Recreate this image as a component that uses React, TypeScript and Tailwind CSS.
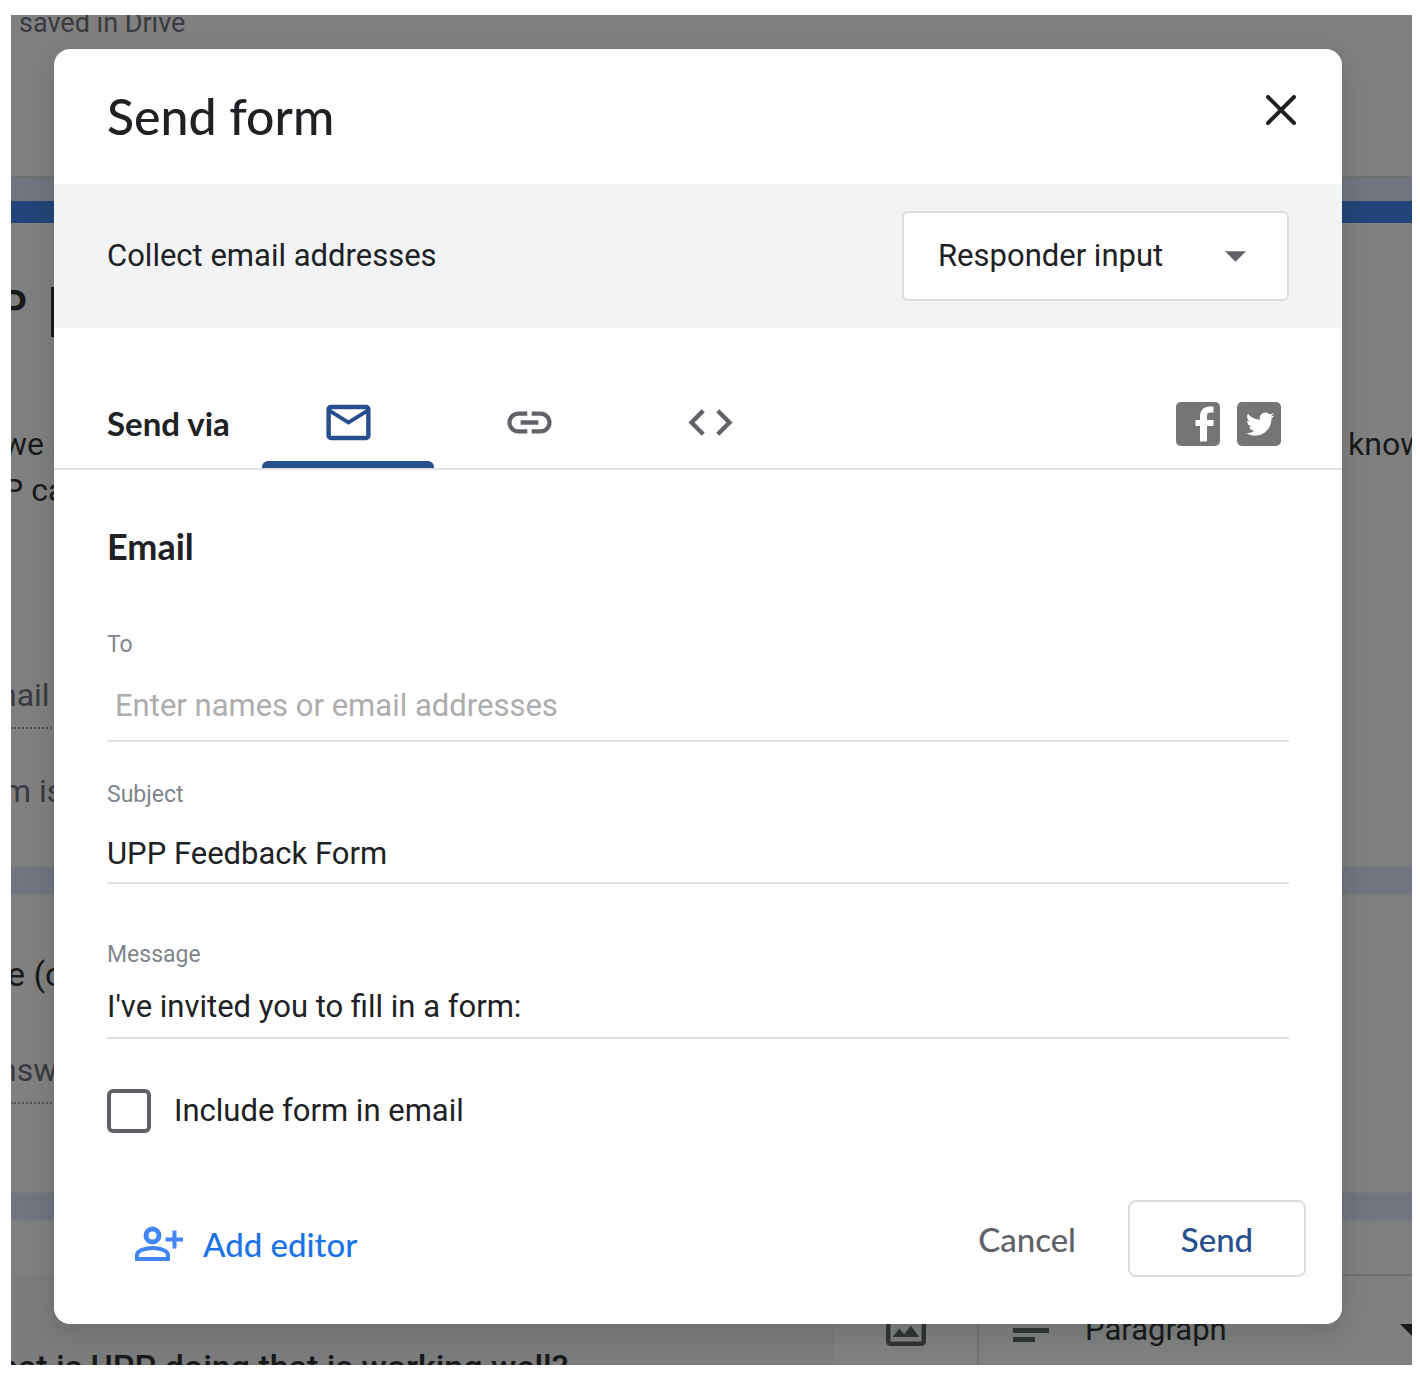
import React from "react";

const tabs = [
  {
    name: "Send by email",
    active: true,
    path: "M22 6c0-1.100-.9-2-2-2H4c-1.100 0-2 .9-2 2v12c0 1.100.9 2 2 2h16c1.100 0 2-.9 2-2V6zm-2 0l-8 5-8-5h16zm0 12H4V8l8 5 8-5v10z",
  },
  {
    name: "Send by link",
    active: false,
    path: "M3.900 12c0-1.710 1.390-3.100 3.100-3.100h4V7H7c-2.760 0-5 2.240-5 5s2.240 5 5 5h4v-1.900H7c-1.710 0-3.100-1.390-3.100-3.100zM8 13h8v-2H8v2zm9-6h-4v1.900h4c1.710 0 3.100 1.390 3.100 3.100s-1.390 3.100-3.100 3.100h-4V17h4c2.760 0 5-2.240 5-5s-2.240-5-5-5z",
  },
  {
    name: "Embed HTML",
    active: false,
    path: "M9.400 16.600L4.800 12l4.600-4.600L8 6l-6 6 6 6 1.400-1.400zm5.200 0l4.600-4.600-4.600-4.600L16 6l6 6-6 6-1.400-1.400z",
  },
];

const Caret = ({ className }: { className: string }) => (
  <svg viewBox="0 0 20 10" aria-hidden="true" className={className}>
    <path d="M0 0h20L10 10z" fill="currentColor" />
  </svg>
);

const Band = () => (
  <div className="h-[29px] shrink-0 border-y-2 border-[#76787c] bg-[#70757f]" />
);

const FormPage = () => (
  <div
    aria-hidden="true"
    className="absolute inset-0 flex flex-col overflow-hidden bg-[#808080] whitespace-nowrap text-[#18191b]"
  >
    <div className="h-[161px] shrink-0 px-2 text-[27px] leading-4 text-[#393b3e]">
      saved in Drive
    </div>
    <div className="h-[25px] shrink-0 border-t-2 border-[#6f7072] bg-[#70757f]" />
    <div className="h-[22px] shrink-0 bg-[#234478]" />
    <div className="flex h-[643px] shrink-0 flex-col">
      <div className="mt-[58px] flex items-start leading-[52px]">
        <span className="-indent-3 text-[44px] font-medium">P</span>
        <span className="mt-[6px] ml-6 h-[50px] w-1 bg-[#18191b]" />
      </div>
      <div className="mt-[84px] flex justify-between text-[32px] leading-[46px]">
        <div>
          <p className="-indent-2">we are</p>
          <p className="-indent-2">P can</p>
        </div>
        <p className="w-16">know</p>
      </div>
      <p className="mt-[158px] w-1/2 border-b-2 border-dotted border-[#4f5051] pb-2 -indent-3 text-[32px] leading-[48px] text-[#393b3e]">
        nail
      </p>
      <p className="mt-[38px] -indent-2 text-[32px] leading-[48px] text-[#393b3e]">
        m is collecting
      </p>
    </div>
    <Band />
    <div className="h-[297px] shrink-0">
      <p className="pt-[54px] -indent-1 text-[34px] leading-[50px]">e (optional)</p>
      <p className="mt-[47px] w-1/2 border-b-2 border-dotted border-[#4f5051] pb-2 -indent-3 text-[32px] leading-[48px] text-[#393b3e]">
        nswer
      </p>
    </div>
    <Band />
    <div className="flex flex-1 items-stretch pt-[53px]">
      <p className="flex-1 bg-[#7c7c7c] pt-[71px] -indent-3 text-[34px] leading-[44px] font-medium">
        hat is UPP doing that is working well?
      </p>
      <div className="w-[143px] pt-8 pl-[52px]">
        <svg viewBox="3 3 18 18" className="size-10 text-[#303235]">
          <path
            fill="currentColor"
            d="M19 5v14H5V5h14m0-2H5c-1.100 0-2 .9-2 2v14c0 1.100.9 2 2 2h14c1.100 0 2-.9 2-2V5c0-1.100-.9-2-2-2zm-4.860 8.860l-3 3.870L9 13.140 6 17h12l-3.860-5.140z"
          />
        </svg>
      </div>
      <div className="flex w-[435px] items-start border-t-2 border-l-2 border-[#6f7072] pt-[30px] pl-[34px]">
        <svg viewBox="0 0 36 44" className="mt-1 h-11 w-9 text-[#303235]">
          <path fill="currentColor" d="M0 9h36v5H0zM0 18h36v5H0zM0 27h22v5H0z" />
        </svg>
        <span className="flex-1 pl-9 text-[31px] leading-[48px]">Paragraph</span>
        <Caret className="mt-[18px] -mr-3 h-3 w-6" />
      </div>
    </div>
  </div>
);

const fieldClass =
  "block w-full border-b-2 border-[#e0e0e0] bg-transparent text-[31px] text-[#202124] outline-none placeholder:text-[#adadad]";
const labelClass = "block text-[23px] leading-[34px] text-[#80868b]";

const SendDialog = () => (
  <section
    role="dialog"
    aria-labelledby="dialog-title"
    className="relative mt-[34px] mr-[70px] mb-[41px] ml-[43px] rounded-[16px] bg-white text-[#202124] shadow-[0_8px_24px_4px_rgba(20,40,30,0.15)]"
  >
    <header className="flex h-[135px] items-start justify-between pr-9 pl-[53px]">
      <h1
        id="dialog-title"
        className="pt-[35px] font-['Lato',sans-serif] text-[50px] leading-[64px] font-medium"
      >
        Send form
      </h1>
      <button type="button" aria-label="Close" className="mt-9 p-[10px]">
        <svg viewBox="0 0 30 30" className="size-[30px]">
          <path
            d="M2 2l26 26M28 2L2 28"
            stroke="currentColor"
            strokeWidth="4"
            strokeLinecap="round"
          />
        </svg>
      </button>
    </header>

    <div className="flex h-[144px] items-center justify-between bg-[#f1f3f4] px-[53px] text-[31px] leading-[48px]">
      <label htmlFor="collect">Collect email addresses</label>
      <div className="relative w-[387px]">
        <select
          id="collect"
          className="block h-[90px] w-full appearance-none rounded-[6px] border-2 border-[#dadce0] bg-white pl-[34px]"
        >
          <option>Responder input</option>
          <option>Verified</option>
          <option>Do not collect</option>
        </select>
        <Caret className="pointer-events-none absolute top-10 right-[43px] h-[11px] w-[21px] text-[#5f6368]" />
      </div>
    </div>

    <div className="flex h-[142px] items-end border-b-2 border-[#e0e0e0] pl-[53px]">
      <h2 className="w-[155px] pb-[22px] font-['Lato',sans-serif] text-[33px] leading-[46px] font-bold">
        Send via
      </h2>
      <div role="tablist" className="flex flex-1 gap-[9px]">
        {tabs.map((tab) => (
          <button
            key={tab.name}
            type="button"
            role="tab"
            aria-label={tab.name}
            aria-selected={tab.active}
            className={`flex w-[172px] flex-col items-center ${
              tab.active ? "text-[#274e8d]" : "text-[#5f6368]"
            }`}
          >
            <svg viewBox="0 0 24 24" className="size-[53px]">
              <path d={tab.path} fill="currentColor" />
            </svg>
            <span
              className={`mt-3 h-[7px] w-full rounded-t-[6px] ${
                tab.active ? "bg-[#274e8d]" : ""
              }`}
            />
          </button>
        ))}
      </div>
      <div className="flex gap-[17px] pr-[61px] pb-[22px]">
        <a href="#facebook" aria-label="Share on Facebook">
          <svg viewBox="0 0 44 44" className="size-11">
            <rect width="44" height="44" rx="5" fill="#757575" />
            <path
              fill="#fff"
              d="M24 39.500V24H19.500v-6H24v-3.500C24 8 28 4.500 33.500 4.500H37.500v6h-3c-2.200 0-3.500 1-3.500 3V18h6.500v6H31v15.500z"
            />
          </svg>
        </a>
        <a href="#twitter" aria-label="Share on Twitter">
          <svg viewBox="0 0 44 44" className="size-11">
            <rect width="44" height="44" rx="5" fill="#757575" />
            <path
              fill="#fff"
              transform="translate(9 8) scale(1.180)"
              d="M23.953 4.570a10 10 0 01-2.825.775 4.958 4.958 0 002.163-2.723c-.951.555-2.005.959-3.127 1.184a4.920 4.920 0 00-8.384 4.482C7.690 8.095 4.067 6.130 1.640 3.162a4.822 4.822 0 00-.666 2.475c0 1.710.870 3.213 2.188 4.096a4.904 4.904 0 01-2.228-.616v.060a4.923 4.923 0 003.946 4.827 4.996 4.996 0 01-2.212.085 4.936 4.936 0 004.604 3.417 9.867 9.867 0 01-6.102 2.105c-.390 0-.779-.023-1.170-.067a13.995 13.995 0 007.557 2.209c9.053 0 13.998-7.496 13.998-13.985 0-.210 0-.420-.015-.630A9.935 9.935 0 0024 4.590z"
            />
          </svg>
        </a>
      </div>
    </div>

    <form className="px-[53px] pt-14">
      <h3 className="font-['Lato',sans-serif] text-[36px] leading-10 font-bold">
        Email
      </h3>

      <label htmlFor="to" className={`mt-[62px] ${labelClass}`}>
        To
      </label>
      <input
        id="to"
        type="text"
        placeholder="Enter names or email addresses"
        className={`mt-2 h-[72px] px-2 ${fieldClass}`}
      />

      <label htmlFor="subject" className={`mt-9 ${labelClass}`}>
        Subject
      </label>
      <input
        id="subject"
        type="text"
        defaultValue="UPP Feedback Form"
        className={`mt-3 h-[60px] ${fieldClass}`}
      />

      <label htmlFor="message" className={`mt-[54px] ${labelClass}`}>
        Message
      </label>
      <input
        id="message"
        type="text"
        defaultValue="I've invited you to fill in a form:"
        className={`mt-[3px] h-[64px] ${fieldClass}`}
      />

      <label className="mt-[50px] flex w-fit items-center gap-[23px] text-[31px] leading-[44px]">
        <input
          type="checkbox"
          className="size-11 appearance-none rounded-[6px] border-4 border-[#5f6368] checked:bg-[#5f6368]"
        />
        Include form in email
      </label>
    </form>

    <footer className="mt-[67px] flex items-center pr-9 pb-[47px] pl-[81px] font-['Lato',sans-serif] text-[33px] leading-10 font-medium">
      <button
        type="button"
        className="flex items-center gap-5 pt-[10px] text-[#1a73e8]"
      >
        <svg viewBox="0 0 48 36" className="h-9 w-12 text-[#4285f4]">
          <g fill="none" stroke="currentColor" strokeWidth="4">
            <circle cx="17.500" cy="9.500" r="6.500" strokeWidth="5" />
            <path d="M2 33v-4c0-4.500 8-7 15.500-7S33 24.500 33 29v4z" />
            <path d="M39.500 4.500v18M30.500 13.500h18" />
          </g>
        </svg>
        Add editor
      </button>
      <button type="button" className="ml-auto px-4 text-[#5f6368]">
        Cancel
      </button>
      <button
        type="button"
        className="ml-9 h-[77px] w-[178px] rounded-[8px] border-2 border-[#dadce0] text-[#274e8d]"
      >
        Send
      </button>
    </footer>
  </section>
);

export default function App() {
  return (
    <main className="bg-white pt-[15px] pr-2 pb-[11px] pl-[11px] font-['Roboto',sans-serif]">
      <div className="relative flow-root overflow-hidden">
        <FormPage />
        <SendDialog />
      </div>
    </main>
  );
}
